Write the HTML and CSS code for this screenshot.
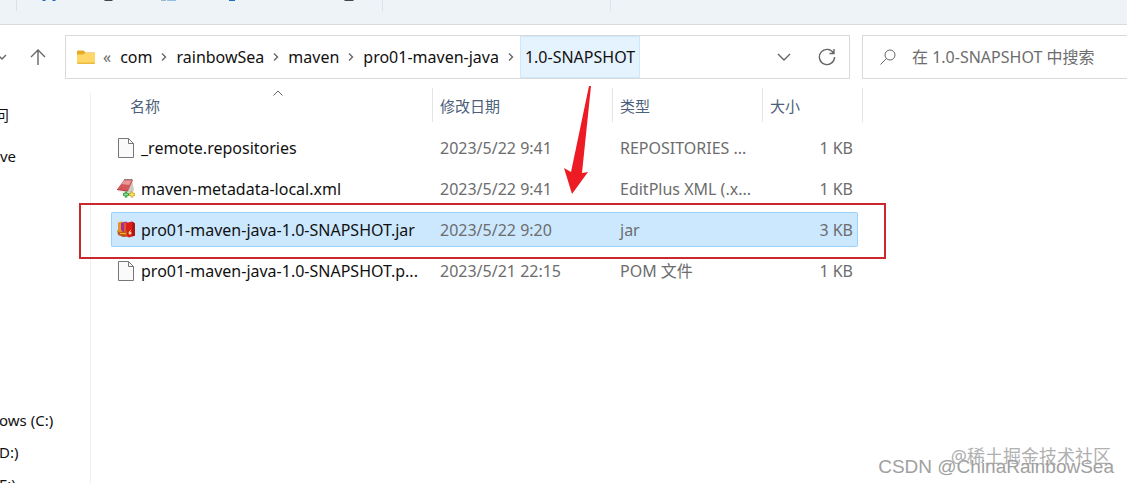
FILE: index.html
```html
<!DOCTYPE html>
<html lang="zh-CN">
<head>
  <meta charset="UTF-8" />
  <meta name="viewport" content="width=device-width, initial-scale=1" />
  <title>1.0-SNAPSHOT</title>
  <link rel="stylesheet" href="styles.css">
</head>
<body>

  <header class="toolbar">
    <svg class="toolbar-icons" width="620" height="12" viewBox="0 0 620 12" aria-hidden="true">
      <path d="M16.500 0v11M382.500 0v11M610.500 0v11" stroke="#dde2e8" />
      <path d="M42 0h4l-1 1h-2zM52 0h4l-1 1h-2zM229 0h6v1h-6z" fill="#1f6fc0" />
      <path d="M104 0h9l-1 1h-7zM344 0h10l-1 1h-8z" fill="#44474c" />
      <path d="M161 0h5v1h-5z" fill="#a9b3bf" />
      <path d="M167 0h9v1h-9z" fill="#8fbfea" />
    </svg>
  </header>

  <div class="nav-row">
    <button class="icon-btn recent" aria-label="最近浏览的位置">
      <svg width="12" height="12" viewBox="0 0 12 12"><path d="M2 4l4 4 4-4" /></svg>
    </button>
    <button class="icon-btn up" aria-label="上移">
      <svg width="18" height="18" viewBox="0 0 18 18"><path d="M9 17V2M2 9l7-7 7 7" /></svg>
    </button>

    <nav class="address">
      <svg class="folder" width="18" height="15" viewBox="0 0 18 15">
        <path d="M0 1.500Q0 .5 1 .5h5.500l2 2H17q1 0 1 1V6H0z" fill="#e8ab27" />
        <path d="M0 4.500h6.500l1.500-1.500h9q1 0 1 1v9q0 1-1 1H1q-1 0-1-1z" fill="#ffd768" />
        <path d="M0 12.500v.5q0 1 1 1h16q1 0 1-1v-.5z" fill="#eebb3e" />
      </svg>
      <span class="more">«</span>
      <a href="#">com</a>
      <svg class="sep" width="6" height="10" viewBox="0 0 6 10"><path d="M1 1.500l3.500 3.500L1 8.500" /></svg>
      <a href="#">rainbowSea</a>
      <svg class="sep" width="6" height="10" viewBox="0 0 6 10"><path d="M1 1.500l3.500 3.500L1 8.500" /></svg>
      <a href="#">maven</a>
      <svg class="sep" width="6" height="10" viewBox="0 0 6 10"><path d="M1 1.500l3.500 3.500L1 8.500" /></svg>
      <a href="#">pro01-maven-java</a>
      <svg class="sep" width="6" height="10" viewBox="0 0 6 10"><path d="M1 1.500l3.500 3.500L1 8.500" /></svg>
      <a href="#" class="current">1.0-SNAPSHOT</a>
      <div class="address-actions">
        <button class="icon-btn" aria-label="展开">
          <svg width="14" height="14" viewBox="0 0 14 14"><path d="M1 4l6 6 6-6" /></svg>
        </button>
        <button class="icon-btn" aria-label="刷新">
          <svg width="18" height="18" viewBox="0 0 18 18"><path d="M15.500 5A7.600 7.600 0 1 0 16.600 9M16 1v4.500h-4.500" /></svg>
        </button>
      </div>
    </nav>

    <label class="search">
      <svg width="16" height="16" viewBox="0 0 16 16"><circle cx="10" cy="6" r="5" /><path d="M6.500 9.500L.5 15.500" /></svg>
      <input type="text" aria-label="搜索" placeholder="在 1.0-SNAPSHOT 中搜索">
    </label>
  </div>

  <div class="content">
    <aside class="sidebar">
      <ul class="places">
        <li class="cut">问</li>
        <li>ve</li>
      </ul>
      <ul class="drives">
        <li>ows (C:)</li>
        <li>D:)</li>
        <li>E:)</li>
      </ul>
    </aside>

    <main class="files">
      <table>
        <colgroup>
          <col class="col-name">
          <col class="col-date">
          <col class="col-type">
          <col class="col-size">
        </colgroup>
        <thead>
          <tr>
            <th><div class="head first">名称
              <svg class="sort" width="10" height="6" viewBox="0 0 10 6"><path d="M.5 5.500L5 1l4.500 4.500" /></svg>
            </div></th>
            <th><div class="head">修改日期</div></th>
            <th><div class="head">类型</div></th>
            <th><div class="head last">大小</div></th>
          </tr>
        </thead>
        <tbody>
          <tr>
            <td><div class="name">
              <svg width="18" height="20" viewBox="0 0 18 20"><path d="M1.500.5h10l5 5v14h-15z" fill="#fafafa" stroke="#777" /><path d="M11.500.5v5h5" fill="none" stroke="#777" /></svg>
              <span>_remote.repositories</span>
            </div></td>
            <td>2023/5/22 9:41</td>
            <td>REPOSITORIES ...</td>
            <td>1 KB</td>
          </tr>
          <tr>
            <td><div class="name">
              <svg width="18" height="20" viewBox="0 0 18 20">
                <path d="M15 1l2 10-4 4-3-3z" fill="#c9cbc4" />
                <path d="M7 0h8l1 1.500-9 0z" fill="#8b7f7a" />
                <path d="M7 1h9l-5 11-11-1.500z" fill="#d4575a" />
                <path d="M7.500 1.500h7L12 6l-7.500-1z" fill="#e99a98" />
                <path d="M0 10.500l11 1.500-.5 2.500L1 12.500z" fill="#f4e9e6" />
                <path d="M0 10.500l11 1.500" stroke="#b5363c" />
                <path d="M9 12.500v6M6 15.500h6" stroke="#249c3c" stroke-width="2.600" />
                <path d="M9 13.500v4M7 15.500h4" stroke="#8be08c" />
                <path d="M15 12.500v6M12 15.500h6" stroke="#c9a21c" stroke-width="2.600" />
                <path d="M15 13.300v4.400M12.800 15.500h4.400" stroke="#ffed62" stroke-width="1.200" />
              </svg>
              <span>maven-metadata-local.xml</span>
            </div></td>
            <td>2023/5/22 9:41</td>
            <td>EditPlus XML (.x...</td>
            <td>1 KB</td>
          </tr>
          <tr class="selected">
            <td><div class="name">
              <svg width="18" height="20" viewBox="0 0 18 20">
                <path d="M1 2.500l4-1 3 1v13l-3 1-4-2z" fill="#e5941f" />
                <path d="M4 3l5-1.500 2 1.500v13l-4 1-3-1z" fill="#a92b9c" />
                <path d="M7 3l2-.5v14l-2 .5z" fill="#dc5738" />
                <path d="M9 3l6-1.500 3 2v12l-6 2-3-1.500z" fill="#dd1f19" />
                <path d="M15 1.500l3 2v12l-3 1z" fill="#ac1812" />
                <path d="M0 10l7 1.500 3-.5v5l-3 1-6-2z" fill="#c25a1c" />
                <path d="M0 11h5M3 13.500h6M12 12l2-2" stroke="#f3b03b" />
                <circle cx="13" cy="13" r="1.500" fill="#f9d89c" />
              </svg>
              <span>pro01-maven-java-1.0-SNAPSHOT.jar</span>
            </div></td>
            <td>2023/5/22 9:20</td>
            <td>jar</td>
            <td>3 KB</td>
          </tr>
          <tr>
            <td><div class="name">
              <svg width="18" height="20" viewBox="0 0 18 20"><path d="M1.500.5h10l5 5v14h-15z" fill="#fafafa" stroke="#777" /><path d="M11.500.5v5h5" fill="none" stroke="#777" /></svg>
              <span>pro01-maven-java-1.0-SNAPSHOT.p...</span>
            </div></td>
            <td>2023/5/21 22:15</td>
            <td>POM 文件</td>
            <td>1 KB</td>
          </tr>
        </tbody>
      </table>

      <!-- Red marker round the jar and the arrow pointing at it -->
      <div class="marker"></div>
      <svg class="arrow" width="26" height="110" viewBox="0 0 26 110">
        <path d="M27 0l-9 87 6-1-16 22L0 82l7 4L25 0z" fill="#ed1c24" />
      </svg>
    </main>
  </div>

  <div class="watermark community">@稀土掘金技术社区</div>
  <div class="watermark author">CSDN @ChinaRainbowSea</div>

</body>
</html>
```
FILE: styles.css
```css
* { box-sizing: border-box; }
body {
  margin: 0;
  height: 100vh;
  display: flex;
  flex-direction: column;
  overflow: hidden;
  position: relative;
  background: #fff;
  color: #111;
  font-family: "Noto Sans", "Noto Sans CJK SC", sans-serif;
  font-size: 16px;
  line-height: 20px;
}
svg { display: block; flex: none; }
ul { list-style: none; margin: 0; padding: 0; }

.toolbar {
  flex: none;
  height: 25px;
  background: #eef3f8;
  border-bottom: 1px solid #d8dadc;
}

/* Address bar and search */
.nav-row {
  flex: none;
  display: flex;
  align-items: center;
  padding: 10px 0 3px;
}
.icon-btn {
  display: flex;
  padding: 0;
  border: none;
  background: none;
}
.icon-btn path, .search svg {
  fill: none;
  stroke: #666;
  stroke-width: 1.4;
}
.recent { margin-left: -4px; }
.up { margin: 0 18px 0 21px; }
.address {
  flex: 1;
  height: 44px;
  display: flex;
  align-items: center;
  padding: 0 13px 0 11px;
  border: 1px solid #d9d9d9;
}
.address a {
  color: #111;
  text-decoration: none;
}
.more { margin: 0 9px 0 8px; color: #666; }
.sep {
  margin: 0 9px;
  fill: none;
  stroke: #666;
  stroke-width: 1.4;
}
.address .current {
  align-self: stretch;
  display: flex;
  align-items: center;
  margin-left: -3px;
  padding: 0 4px;
  background: #e5f3ff;
  border: 1px solid #cce8ff;
}
.address-actions {
  display: flex;
  align-items: center;
  gap: 27px;
  margin-left: auto;
}
.search {
  width: 265px;
  height: 44px;
  display: flex;
  align-items: center;
  gap: 16px;
  margin-left: 12px;
  padding-left: 17px;
  border: 1px solid #d9d9d9;
  border-right: none;
}
.search svg { stroke-width: 1; }
.search input {
  flex: 1;
  min-width: 0;
  padding: 0;
  border: none;
  outline: none;
  background: none;
  font: inherit;
}
.search input::placeholder { color: #6d6d6d; opacity: 1; }

.content {
  flex: 1;
  min-height: 0;
  display: flex;
}

/* Navigation pane */
.sidebar {
  width: 91px;
  margin-top: 10px;
  border-right: 1px solid #f0f0f0;
  overflow: hidden;
  font-size: 15px;
}
.places li { line-height: 41px; }
.places { padding-top: 3px; }
.places .cut { margin-left: -6px; }
.drives { margin: 227px 0 0 -1px; }
.drives li { line-height: 32px; }

/* File list */
.files {
  flex: 1;
  position: relative;
  padding-left: 20px;
}
table {
  width: 747px;
  table-layout: fixed;
  border-collapse: separate;
  border-spacing: 0 6px;
}
.col-name { width: 321px; }
.col-date { width: 180px; }
.col-type { width: 150px; }
.col-size { width: 96px; }
th {
  height: 36px;
  padding: 0;
  vertical-align: top;
  text-align: left;
  font-size: 15px;
  font-weight: normal;
  color: #4c607a;
}
.head {
  position: relative;
  height: 34px;
  padding-left: 7px;
  line-height: 36px;
  border-left: 1px solid #e3e5e8;
}
.head.first { padding-left: 19px; border-left: none; }
.head.last { margin-right: -5px; border-right: 1px solid #e3e5e8; }
.sort {
  position: absolute;
  top: 2px;
  left: 162px;
  fill: none;
  stroke: #666;
}
td {
  height: 35px;
  padding: 0 0 0 8px;
  white-space: nowrap;
  color: #6d6d6d;
  border: 1px solid transparent;
  border-width: 1px 0;
}
td:first-child { padding-left: 5px; color: #111; border-left-width: 1px; }
td:last-child { padding: 0 4px 0 0; text-align: right; border-right-width: 1px; }
.name {
  display: flex;
  align-items: center;
  gap: 6px;
}
.selected td {
  background: #cce8ff;
  border-color: #99d1ff;
}
.selected td:first-child { border-radius: 2px 0 0 2px; }
.selected td:last-child { border-radius: 0 2px 2px 0; }

.marker {
  position: absolute;
  top: 121px;
  left: -12px;
  width: 807px;
  height: 56px;
  border: 2px solid #c8282e;
}
.arrow {
  position: absolute;
  top: 4px;
  left: 473px;
  overflow: visible;
}

.watermark {
  position: absolute;
  white-space: nowrap;
  text-shadow: 1px 1px 0 #fff;
}
.community {
  right: 16px;
  bottom: 15px;
  font-size: 18px;
  line-height: 24px;
  color: #b0b0b0;
}
.author {
  right: 13px;
  bottom: 5px;
  font-family: "Liberation Sans", sans-serif;
  font-size: 19px;
  line-height: 22px;
  color: #a0a0a0;
}
```
